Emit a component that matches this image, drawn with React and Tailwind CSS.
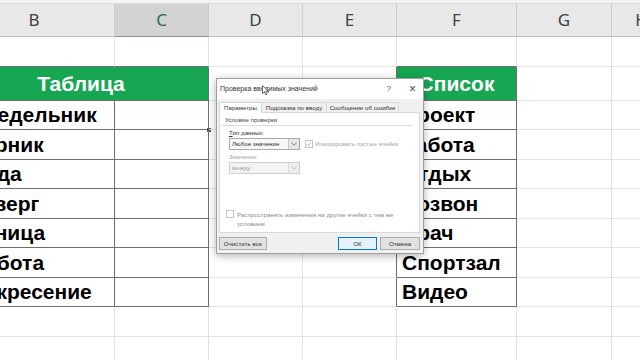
import React from "react";

const W = {
  B: "w-[161px]",
  C: "w-[94px]",
  D: "w-[94px]",
  E: "w-[94px]",
  F: "w-[120px]",
  G: "w-[95px]",
  H: "w-[60px]",
  BC: "w-[255px]",
};
const RB = { d: "border-r-[#6e6e6e]", g: "border-r-[#e2e2e2]" };
const BB = { d: "border-b-[#6e6e6e]", g: "border-b-[#e2e2e2]" };

function Cell({ w, r = "g", b = "g", className = "", children }) {
  return (
    <div className={`${W[w]} ${RB[r]} ${BB[b]} border-r border-b shrink-0 h-full relative ${className}`}>
      {children}
    </div>
  );
}

function Txt({ children, pad = "pl-[5px]" }) {
  return (
    <div className={`flex items-center h-full ${pad} text-[21px] font-bold text-black whitespace-nowrap overflow-hidden font-['Liberation_Sans',Arial,sans-serif]`}>
      {children}
    </div>
  );
}

function Head({ children }) {
  return (
    <div className="flex items-center justify-center h-full text-[21px] font-bold text-white whitespace-nowrap font-['Liberation_Sans',Arial,sans-serif]">
      {children}
    </div>
  );
}

const left = ["Понедельник", "Вторник", "Среда", "Четверг", "Пятница", "Суббота", "Воскресение"];
const right = ["Проект", "Работа", "Отдых", "Созвон", "Врач", "Спортзал", "Видео"];
const rowH = ["h-[29px]", "h-[30px]", "h-[29px]", "h-[30px]", "h-[29px]", "h-[30px]", "h-[29px]"];

function HeaderCell({ w, label, sel }) {
  return (
    <div
      className={`${W[w]} shrink-0 h-full border-r border-r-[#cdcdcd] border-b ${
        sel ? "bg-[#d3d3d3] border-b-[#7f9c8c] text-[#2e6b4f]" : "bg-[#e8e8e8] border-b-[#bdbdbd] text-[#404040]"
      } flex items-center justify-center text-[17px] font-['Noto_Sans',Arial,sans-serif]`}
    >
      {label}
    </div>
  );
}

function Checkbox({ checked, disabled }) {
  return (
    <div
      className={`w-[8px] h-[8px] shrink-0 border bg-white flex items-center justify-center ${
        disabled ? "border-[#c4c4c4]" : "border-[#8a8a8a]"
      }`}
    >
      {checked && (
        <svg width="6" height="6" viewBox="0 0 6 6">
          <path d="M0.8 3.1 L2.3 4.6 L5.2 1.2" fill="none" stroke="#a8a8a8" strokeWidth="0.9" />
        </svg>
      )}
    </div>
  );
}

function Select({ value, disabled }) {
  return (
    <div
      className={`w-[71px] h-[12px] border flex items-center ${
        disabled ? "border-[#cfcfcf] bg-[#f2f2f2] text-[#a0a0a0]" : "border-[#a9a9a9] bg-[#f7f7f7] text-[#333]"
      }`}
    >
      <span className="pl-[2px] flex-1 whitespace-nowrap">{value}</span>
      <div
        className={`w-[11px] h-full border-l flex items-center justify-center ${
          disabled ? "border-[#dadada] bg-[#eeeeee]" : "border-[#c8c8c8] bg-[#e6e6e6]"
        }`}
      >
        <svg width="6" height="4" viewBox="0 0 6 4">
          <path d="M0.5 0.8 L3 3.2 L5.5 0.8" fill="none" stroke={disabled ? "#b0b0b0" : "#707070"} strokeWidth="0.9" />
        </svg>
      </div>
    </div>
  );
}

function Dialog() {
  return (
    <div className="absolute left-[216px] top-[78px] w-[208px] h-[176px] bg-[#f0f0f0] border border-[#a0a0a0] shadow-[0_2px_8px_rgba(0,0,0,0.3)] flex flex-col text-[6.2px] leading-[8px] text-[#333] font-['Liberation_Sans',Arial,sans-serif]">
      <div className="h-[20px] bg-white flex items-center pl-[3px] shrink-0 text-[7px]">
        <span className="whitespace-nowrap">Проверка вводимых значений</span>
        <span className="ml-auto text-[8px] text-[#444]">?</span>
        <span className="ml-[18px] mr-[7px] text-[12px] leading-[12px] text-[#444]">×</span>
      </div>
      <div className="flex pl-[2px] mt-[2px] h-[11px] items-end shrink-0">
        <div className="h-[11px] w-[43px] bg-white border border-[#d4d4d4] border-b-0 flex items-center justify-center relative z-10 -mb-px">
          Параметры
        </div>
        <div className="h-[10px] w-[66px] bg-[#f0f0f0] border border-[#d9d9d9] border-b-0 -ml-px flex items-center justify-center whitespace-nowrap">
          Подсказка по вводу
        </div>
        <div className="h-[10px] w-[73px] bg-[#f0f0f0] border border-[#d9d9d9] border-b-0 -ml-px flex items-center justify-center whitespace-nowrap">
          Сообщение об ошибке
        </div>
      </div>
      <div className="ml-[2px] w-[201px] h-[121px] bg-white border border-[#d9d9d9] flex flex-col pl-[5px] pr-[6px] shrink-0">
        <div className="mt-[3px] text-[#444] whitespace-nowrap">Условие проверки</div>
        <div className="mt-[1px] h-px bg-[#dcdcdc] -ml-[3px]" />
        <div className="mt-[3px] ml-[4px] whitespace-nowrap">
          <span className="underline">Т</span>ип данных:
        </div>
        <div className="mt-[1px] ml-[4px] flex items-center">
          <Select value="Любое значение" />
          <div className="ml-[5px] flex items-center">
            <Checkbox checked disabled />
            <span className="ml-[2px] text-[#a5a5a5] whitespace-nowrap">Игнорировать пустые ячейки</span>
          </div>
        </div>
        <div className="mt-[3px] ml-[4px] text-[#a5a5a5]">Значение:</div>
        <div className="mt-[1px] ml-[4px]">
          <Select value="между" disabled />
        </div>
        <div className="flex-1" />
        <div className="flex items-start mb-[4px] ml-[1px]">
          <div className="mt-[0px]">
            <Checkbox disabled />
          </div>
          <div className="ml-[3px] text-[#8a8a8a] leading-[9px]">
            Распространять изменения на другие ячейки с тем же
            <br />
            условием
          </div>
        </div>
      </div>
      <div className="flex mt-[4px] pl-[2px] pr-[3px]">
        <div className="w-[48px] h-[13px] bg-[#e1e1e1] border border-[#adadad] flex items-center justify-center whitespace-nowrap">
          Очистить все
        </div>
        <div className="ml-auto w-[39px] h-[13px] bg-[#e5f1fb] border border-[#0078d7] flex items-center justify-center">
          ОК
        </div>
        <div className="ml-[3px] w-[40px] h-[13px] bg-[#e1e1e1] border border-[#adadad] flex items-center justify-center">
          Отмена
        </div>
      </div>
    </div>
  );
}

export default function App() {
  return (
    <div className="w-[640px] h-[360px] overflow-hidden bg-white relative">
      <div className="-ml-[46px] w-[800px]">
        <div className="h-[4px] bg-[#f4f4f4] border-b border-[#dadada]" />
        <div className="flex h-[33px]">
          <HeaderCell w="B" label="B" />
          <HeaderCell w="C" label="C" sel />
          <HeaderCell w="D" label="D" />
          <HeaderCell w="E" label="E" />
          <HeaderCell w="F" label="F" />
          <HeaderCell w="G" label="G" />
          <HeaderCell w="H" label="H" />
        </div>
        <div className="flex h-[30px]">
          <Cell w="B" b="d" />
          <Cell w="C" b="d" />
          <Cell w="D" />
          <Cell w="E" />
          <Cell w="F" b="d" />
          <Cell w="G" />
          <Cell w="H" />
        </div>
        <div className="flex h-[34px]">
          <Cell w="BC" r="d" b="d" className="bg-[#17a652]">
            <Head>Таблица</Head>
          </Cell>
          <Cell w="D" />
          <Cell w="E" r="d" />
          <Cell w="F" r="d" b="d" className="bg-[#17a652]">
            <Head>Список</Head>
          </Cell>
          <Cell w="G" />
          <Cell w="H" />
        </div>
        {left.map((l, i) => (
          <div key={l} className={`flex ${rowH[i]}`}>
            <Cell w="B" r="d" b="d">
              <Txt pad="pl-[3px]">{l}</Txt>
            </Cell>
            <Cell w="C" r="d" b="d">
              {i === 0 && <div className="absolute -right-[3px] -bottom-[3px] w-[4px] h-[4px] bg-[#4a5e52]" />}
            </Cell>
            <Cell w="D" />
            <Cell w="E" r="d" />
            <Cell w="F" r="d" b="d">
              <Txt>{right[i]}</Txt>
            </Cell>
            <Cell w="G" />
            <Cell w="H" />
          </div>
        ))}
        {[0, 1].map((k) => (
          <div key={k} className="flex h-[30px]">
            <Cell w="B" />
            <Cell w="C" />
            <Cell w="D" />
            <Cell w="E" />
            <Cell w="F" />
            <Cell w="G" />
            <Cell w="H" />
          </div>
        ))}
      </div>
      <Dialog />
      <svg className="absolute left-[262px] top-[85px]" width="7" height="11" viewBox="0 0 7 11">
        <path d="M0.5 0.5 L0.5 8.5 L2.5 6.8 L3.8 9.8 L5 9.3 L3.8 6.4 L6.3 6.4 Z" fill="#fff" stroke="#333" strokeWidth="0.7" />
      </svg>
    </div>
  );
}
